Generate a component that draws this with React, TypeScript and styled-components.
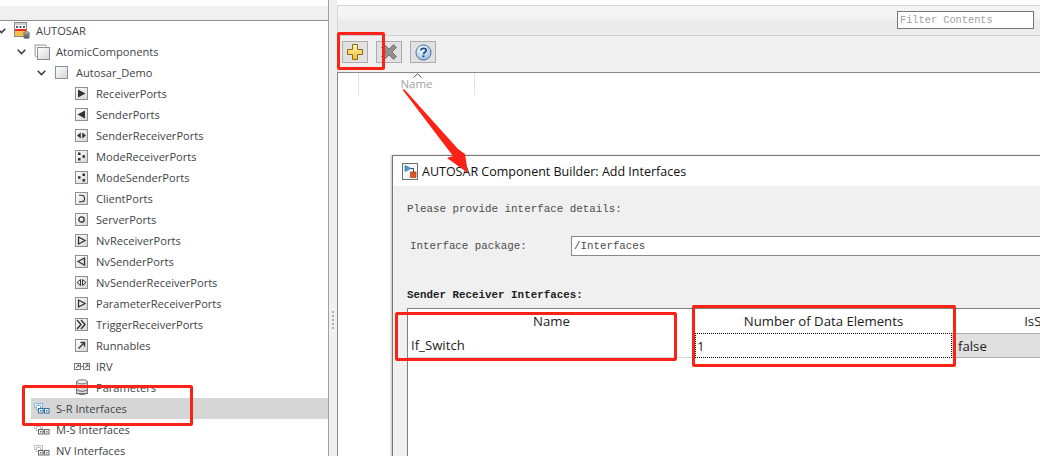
import React from "react";
import styled, { createGlobalStyle } from "styled-components";

const GlobalStyle = createGlobalStyle`
  html, body {
    margin: 0;
    padding: 0;
    background: #fff;
  }
`;

const Page = styled.div`
  position: relative;
  width: 1040px;
  height: 456px;
  overflow: hidden;
  display: flex;
  background: #fff;
  font-family: "Open Sans", "Noto Sans", sans-serif;
`;

const TreePanel = styled.div`
  width: 329px;
  height: 100%;
  padding-top: 6px;
  box-sizing: border-box;
  display: flex;
  flex-direction: column;
  flex-shrink: 0;
  border-right: 1px solid #a0a0a0;
  overflow: hidden;
`;

const TreeHeader = styled.div`
  height: 14px;
  flex-shrink: 0;
  background: #f0f0f0;
  border-bottom: 1px solid #8e8e8e;
`;

const TreeList = styled.div`
  display: flex;
  flex-direction: column;
  margin-top: -1px;
`;

const Row = styled.div<{ $indent: number; $selected?: boolean }>`
  height: 21px;
  flex-shrink: 0;
  display: flex;
  align-items: center;
  padding-left: ${(p) => (p.$selected ? 3 : p.$indent)}px;
  margin-left: ${(p) => (p.$selected ? 31 : 0)}px;
  background: ${(p) => (p.$selected ? "#d6d6d6" : "transparent")};
  color: #404349;
  font-size: 11.1px;
  white-space: nowrap;
`;

const Twisty = styled.span`
  width: 14px;
  height: 21px;
  flex-shrink: 0;
  display: flex;
  align-items: center;
  margin-left: -3px;
  margin-right: 3px;
`;

const IconSlot = styled.span`
  width: 22px;
  flex-shrink: 0;
  display: flex;
  align-items: center;
`;

const Splitter = styled.div`
  width: 8px;
  flex-shrink: 0;
  background: #f0f0f0;
  display: flex;
  flex-direction: column;
  align-items: center;
  justify-content: flex-start;
  gap: 2px;
  padding-top: 311px;
  box-sizing: border-box;
`;

const GripDot = styled.span`
  width: 2px;
  height: 2px;
  background: #b4b4b4;
`;

const ContentPanel = styled.div`
  flex: 1;
  margin-top: 5px;
  display: flex;
  flex-direction: column;
  border-top: 1px solid #d4d4d4;
  border-left: 1px solid #d4d4d4;
  background: #f0f0f0;
`;

const FilterBar = styled.div`
  height: 30px;
  flex-shrink: 0;
  display: flex;
  align-items: flex-start;
  justify-content: flex-end;
  padding: 5px 6px 0 0;
  box-sizing: border-box;
  background: linear-gradient(#f5f5f5 0, #f3f3f3 13px, #ebebeb 14px, #ebebeb 100%);
  border-bottom: 1px solid #d0d0d0;
`;

const FilterBox = styled.div`
  width: 137px;
  height: 18px;
  box-sizing: border-box;
  border: 1px solid #777;
  background: #fff;
  padding-left: 2px;
  color: #a0a0a0;
  font: 10.3px/17px "Liberation Mono", monospace;
`;

const Toolbar = styled.div`
  height: 36px;
  flex-shrink: 0;
  display: flex;
  align-items: flex-start;
  gap: 8px;
  padding: 5px 0 0 4px;
  box-sizing: border-box;
`;

const ToolButton = styled.div`
  width: 26px;
  height: 22px;
  box-sizing: border-box;
  border: 1px solid #adadad;
  background: #e1e1e1;
  display: flex;
  align-items: center;
  justify-content: center;
`;

const ListArea = styled.div`
  flex: 1;
  margin-left: -1px;
  background: #fff;
  border-top: 1px solid #8a8a8a;
  border-left: 1px solid #8a8a8a;
`;

const ListHeader = styled.div`
  display: flex;
  height: 22px;
  padding-left: 20px;
`;

const ListColumn = styled.div`
  position: relative;
  width: 117px;
  box-sizing: border-box;
  border-left: 1px solid #e0e0e0;
  border-right: 1px solid #e0e0e0;
  text-align: center;
  color: #a3a3a3;
  font-size: 11.5px;
  line-height: 22px;
`;

const SortCaret = styled.svg`
  position: absolute;
  left: 54px;
  top: 0;
`;

const Dialog = styled.div`
  position: absolute;
  left: 392px;
  top: 155px;
  width: 760px;
  height: 320px;
  border: 1px solid #777;
  box-shadow: -1px 0 2px rgba(0, 0, 0, 0.25);
  background: #f0f0f0;
  display: flex;
  flex-direction: column;
`;

const TitleBar = styled.div`
  height: 30px;
  flex-shrink: 0;
  background: #fff;
  display: flex;
  align-items: center;
  gap: 4px;
  padding-left: 9px;
  color: #111;
  font-size: 12.5px;
`;

const DialogBody = styled.div`
  flex: 1;
  padding: 15px 0 0 14px;
  display: flex;
  flex-direction: column;
`;

const Prompt = styled.div`
  height: 16px;
  color: #4c4c4c;
  font: 10.85px/16px "Liberation Mono", monospace;
`;

const PackageRow = styled.div`
  display: flex;
  align-items: center;
  height: 20px;
  margin-top: 19px;
  padding-left: 3px;
  color: #4c4c4c;
  font: 10.8px "Liberation Mono", monospace;
`;

const PackageLabel = styled.span`
  width: 161px;
  flex-shrink: 0;
`;

const PackageInput = styled.div`
  flex: 1;
  height: 20px;
  box-sizing: border-box;
  border: 1px solid #8a8a8a;
  background: #fff;
  padding-left: 2px;
  line-height: 19px;
  font-size: 10.8px;
`;

const SectionTitle = styled.div`
  height: 16px;
  margin-top: 31px;
  color: #222;
  font: bold 10.85px/16px "Liberation Mono", monospace;
`;

const InterfaceTable = styled.div`
  flex: 1;
  margin-top: 5px;
  background: #fff;
  border-top: 1px solid #808080;
  border-left: 1px solid #808080;
  display: grid;
  grid-template-columns: 287px 257px 198px;
  grid-template-rows: 24px 25px;
  align-content: start;
  color: #222;
  font-size: 13.2px;
`;

const HeadCell = styled.div`
  display: flex;
  align-items: center;
  justify-content: center;
`;

const NameCell = styled.div`
  display: flex;
  align-items: center;
  padding-left: 3px;
  border-bottom: 1px solid #d8d8d8;
`;

const EditCell = styled.div`
  display: flex;
  align-items: center;
  padding-left: 1px;
  border: 1px dotted #111;
`;

const ReadonlyCell = styled.div`
  display: flex;
  align-items: center;
  padding-left: 6px;
  background: #e0e0e0;
  border-top: 1px solid #b0b0b0;
  border-bottom: 1px solid #b0b0b0;
`;

const RedBox = styled.div<{ $x: number; $y: number; $w: number; $h: number }>`
  position: absolute;
  left: ${(p) => p.$x}px;
  top: ${(p) => p.$y}px;
  width: ${(p) => p.$w}px;
  height: ${(p) => p.$h}px;
  box-sizing: border-box;
  border: 3px solid #fb2216;
  border-radius: 2px;
`;

const Arrow = styled.svg`
  position: absolute;
  left: 0;
  top: 0;
`;

const PortFrame = styled.svg`
  margin-left: 1px;
`;

const DatabaseFrame = styled.svg`
  margin-left: 2px;
`;

const Chevron = () => (
  <svg width="9" height="6" viewBox="0 0 9 6">
    <path d="M0.7 0.8 L4.5 4.6 L8.3 0.8" fill="none" stroke="#3c3c3c" strokeWidth="1.5" />
  </svg>
);

const Gradients = () => (
  <defs>
    <linearGradient id="frameFill" x1="0" y1="0" x2="1" y2="1">
      <stop offset="0" stopColor="#ffffff" />
      <stop offset="1" stopColor="#d2d6da" />
    </linearGradient>
  </defs>
);

type PortKind =
  | "receiver"
  | "sender"
  | "senderReceiver"
  | "modeReceiver"
  | "modeSender"
  | "client"
  | "server"
  | "nvReceiver"
  | "nvSender"
  | "nvSenderReceiver"
  | "trigger"
  | "runnable"
  | "plain";

const glyphs: Record<PortKind, React.ReactNode> = {
  receiver: <path d="M3 2.5 L10.5 6.5 L3 10.5Z" fill="#333" />,
  sender: <path d="M10 2.5 L2.5 6.5 L10 10.5Z" fill="#333" />,
  senderReceiver: <path d="M5.8 3.5 L2 6.5 L5.8 9.5Z M7.2 3.5 L11 6.5 L7.2 9.5Z" fill="#333" />,
  modeReceiver: <path d="M3 2.5h2.5v2.5H3z M7.5 5.2h2.5v2.5H7.5z M3 8h2.5v2.5H3z" fill="#333" />,
  modeSender: <path d="M7.5 2.5h2.5v2.5H7.5z M3 5.2h2.5v2.5H3z M7.5 8h2.5v2.5H7.5z" fill="#333" />,
  client: <path d="M4 3.2 H6.5 A3 3.3 0 0 1 6.5 9.8 H4" fill="none" stroke="#333" strokeWidth="1.1" />,
  server: <circle cx="6.5" cy="6.5" r="2.7" fill="none" stroke="#333" strokeWidth="1.3" />,
  nvReceiver: <path d="M3.5 3 L10 6.5 L3.5 10Z" fill="none" stroke="#333" strokeWidth="1.3" />,
  nvSender: <path d="M9.5 3 L3 6.5 L9.5 10Z" fill="none" stroke="#333" strokeWidth="1.3" />,
  nvSenderReceiver: (
    <path
      d="M5.5 3.5 L2 6.5 L5.5 9.5Z M7.5 3.5 L11 6.5 L7.5 9.5Z"
      fill="none"
      stroke="#333"
      strokeWidth="1"
    />
  ),
  trigger: (
    <path
      d="M2 2 L6 6.5 L2 11 M6 2 L10 6.5 L6 11"
      fill="none"
      stroke="#333"
      strokeWidth="1.4"
    />
  ),
  runnable: <path d="M3.5 9.5 L8.5 4.5 M5.5 3.5 H9.5 V7.5" fill="none" stroke="#333" strokeWidth="1.4" />,
  plain: null,
};

const PortIcon = ({ kind }: { kind: PortKind }) => (
  <PortFrame width="13" height="13" viewBox="0 0 13 13">
    <Gradients />
    <rect x="0.5" y="0.5" width="12" height="12" fill="url(#frameFill)" stroke="#8c8f93" />
    {glyphs[kind]}
  </PortFrame>
);

const ModelIcon = () => (
  <svg width="16" height="17" viewBox="0 0 16 17">
    <rect x="0.5" y="0.5" width="12" height="14" fill="#fff" stroke="#8a8a8a" />
    <rect x="1" y="1" width="11" height="2" fill="#cfcfcf" />
    <path d="M2 4h2v2H2z M5.5 4h2v2h-2z M9 4h2v2H9z" fill="#5a5a5a" />
    <rect x="1" y="7" width="11" height="2" fill="#ee2a22" />
    <rect x="1" y="9" width="11" height="5" fill="#f8bc4a" />
    <rect x="9.5" y="11" width="6" height="4.5" fill="#777" />
    <ellipse cx="12.5" cy="11" rx="3" ry="1.4" fill="#a8a8a8" stroke="#666" strokeWidth="0.5" />
    <ellipse cx="12.5" cy="15.4" rx="3" ry="1.3" fill="#666" />
  </svg>
);

const StackIcon = () => (
  <svg width="16" height="16" viewBox="0 0 16 16">
    <Gradients />
    <rect x="0.5" y="0.5" width="11" height="11" fill="#fff" stroke="#d0d0d0" />
    <rect x="1.5" y="1.5" width="11" height="11" fill="#fff" stroke="#c0c0c0" />
    <rect x="3.5" y="3.5" width="12" height="12" fill="url(#frameFill)" stroke="#8c8f93" />
  </svg>
);

const IrvIcon = () => (
  <svg width="16" height="9" viewBox="0 0 16 9">
    <path d="M7 4.5 H9" stroke="#777" />
    <rect x="0.5" y="1.5" width="6" height="6" fill="#f4f4f4" stroke="#777" />
    <rect x="9.5" y="1.5" width="6" height="6" fill="#f4f4f4" stroke="#777" />
    <path d="M2 6 L5 3 M3 3 H5 V5 M11 6 L14 3 M12 3 H14 V5" fill="none" stroke="#444" strokeWidth="0.8" />
  </svg>
);

const DatabaseIcon = () => (
  <DatabaseFrame width="13" height="17" viewBox="0 0 13 17">
    <rect x="0.5" y="2.5" width="11" height="12" fill="#d8d8d8" stroke="#7a7a7a" />
    <ellipse cx="6" cy="2.8" rx="5.5" ry="2" fill="#efefef" stroke="#7a7a7a" />
    <path d="M0.5 7 Q6 10 11.5 7 M0.5 11 Q6 14 11.5 11 M0.5 14.4 Q6 17 11.5 14.4" fill="none" stroke="#6a6a6a" />
  </DatabaseFrame>
);

const InterfaceIcon = ({ $tone }: { $tone: "blue" | "grey" }) => {
  const back = $tone === "blue" ? "#8cb8dc" : "#c4c4c4";
  const front = $tone === "blue" ? "#2f6fa8" : "#666";
  return (
    <svg width="16" height="11" viewBox="0 0 16 11">
      <rect x="0.5" y="0.5" width="4" height="4" fill="#fff" stroke={back} />
      <rect x="4.5" y="0.5" width="4" height="4" fill="#fff" stroke={back} />
      <rect x="2.5" y="2.5" width="4" height="4" fill="#fff" stroke={back} />
      <path d="M6 7.5 H11" stroke={front} />
      <rect x="4.5" y="5.5" width="4.5" height="4.5" fill="#fff" stroke={front} />
      <rect x="10.5" y="5.5" width="4.5" height="4.5" fill="#fff" stroke={front} />
      <path d="M6 7h1.5v1.5H6z M12 7h1.5v1.5H12z" fill={front} />
    </svg>
  );
};

const PlusIcon = () => (
  <svg width="16" height="16" viewBox="0 0 16 16">
    <defs>
      <linearGradient id="plusFill" x1="0" y1="0" x2="0" y2="1">
        <stop offset="0" stopColor="#fff6b8" />
        <stop offset="1" stopColor="#f2bd2a" />
      </linearGradient>
    </defs>
    <path
      d="M5.5 0.5 H10.5 V5.5 H15.5 V10.5 H10.5 V15.5 H5.5 V10.5 H0.5 V5.5 H5.5Z"
      fill="url(#plusFill)"
      stroke="#8d6b14"
      strokeLinejoin="round"
    />
  </svg>
);

const RemoveIcon = () => (
  <svg width="16" height="16" viewBox="0 0 16 16">
    <path
      d="M0.5 3.5 L3.5 0.5 L8 5 L12.5 0.5 L15.5 3.5 L11 8 L15.5 12.5 L12.5 15.5 L8 11 L3.5 15.5 L0.5 12.5 L5 8Z"
      fill="#8f8f8f"
      stroke="#777"
    />
  </svg>
);

const HelpIcon = () => (
  <svg width="17" height="17" viewBox="0 0 18 18">
    <defs>
      <radialGradient id="helpFill" cx="0.4" cy="0.3" r="0.8">
        <stop offset="0" stopColor="#ffffff" />
        <stop offset="1" stopColor="#8db6dc" />
      </radialGradient>
    </defs>
    <circle cx="9" cy="9" r="8" fill="url(#helpFill)" stroke="#3d6c9c" />
    <path
      d="M6.3 6.8 C6.3 3.8 11.8 3.8 11.8 6.8 C11.8 8.8 9 8.6 9 10.8"
      fill="none"
      stroke="#1f4f86"
      strokeWidth="1.9"
    />
    <rect x="8" y="12" width="2" height="2" fill="#1f4f86" />
  </svg>
);

const WindowIcon = () => (
  <svg width="16" height="17" viewBox="0 0 16 17">
    <rect x="0.5" y="0.5" width="15" height="16" fill="#f6f6f6" stroke="#6e6e6e" />
    <path d="M3 2.5 L9 5.5 L3 8.5Z" fill="#3f9bd0" stroke="#1f6fa0" strokeWidth="0.6" />
    <path d="M9 5.5 H11.5 V9" fill="none" stroke="#444" />
    <rect x="8.5" y="9" width="5.5" height="5.5" fill="#e2541e" stroke="#9a3410" strokeWidth="0.6" />
  </svg>
);

type TreeItem = {
  label: string;
  indent: number;
  icon: React.ReactNode;
  twisty?: boolean;
  selected?: boolean;
};

const port = (label: string, kind: PortKind): TreeItem => ({
  label,
  indent: 60,
  icon: <PortIcon kind={kind} />,
});

const items: TreeItem[] = [
  { label: "AUTOSAR", indent: 0, icon: <ModelIcon />, twisty: true },
  { label: "AtomicComponents", indent: 20, icon: <StackIcon />, twisty: true },
  { label: "Autosar_Demo", indent: 40, icon: <PortIcon kind="plain" />, twisty: true },
  port("ReceiverPorts", "receiver"),
  port("SenderPorts", "sender"),
  port("SenderReceiverPorts", "senderReceiver"),
  port("ModeReceiverPorts", "modeReceiver"),
  port("ModeSenderPorts", "modeSender"),
  port("ClientPorts", "client"),
  port("ServerPorts", "server"),
  port("NvReceiverPorts", "nvReceiver"),
  port("NvSenderPorts", "nvSender"),
  port("NvSenderReceiverPorts", "nvSenderReceiver"),
  port("ParameterReceiverPorts", "nvReceiver"),
  port("TriggerReceiverPorts", "trigger"),
  port("Runnables", "runnable"),
  { label: "IRV", indent: 60, icon: <IrvIcon /> },
  { label: "Parameters", indent: 60, icon: <DatabaseIcon /> },
  { label: "S-R Interfaces", indent: 20, icon: <InterfaceIcon $tone="blue" />, selected: true },
  { label: "M-S Interfaces", indent: 20, icon: <InterfaceIcon $tone="grey" /> },
  { label: "NV Interfaces", indent: 20, icon: <InterfaceIcon $tone="grey" /> },
];

const App: React.FC = () => {
  return (
    <Page>
      <GlobalStyle />
      <TreePanel>
        <TreeHeader />
        <TreeList>
          {items.map((item) => (
            <Row key={item.label} $indent={item.indent} $selected={item.selected}>
              {!item.selected && <Twisty>{item.twisty && <Chevron />}</Twisty>}
              <IconSlot>{item.icon}</IconSlot>
              {item.label}
            </Row>
          ))}
        </TreeList>
      </TreePanel>
      <Splitter>
        {[0, 1, 2, 3, 4].map((i) => (
          <GripDot key={i} />
        ))}
      </Splitter>
      <ContentPanel>
        <FilterBar>
          <FilterBox>Filter Contents</FilterBox>
        </FilterBar>
        <Toolbar>
          <ToolButton>
            <PlusIcon />
          </ToolButton>
          <ToolButton>
            <RemoveIcon />
          </ToolButton>
          <ToolButton>
            <HelpIcon />
          </ToolButton>
        </Toolbar>
        <ListArea>
          <ListHeader>
            <ListColumn>
              <SortCaret width="9" height="5" viewBox="0 0 9 5">
                <path d="M0.5 4.5 L4.5 0.8 L8.5 4.5" fill="none" stroke="#555" />
              </SortCaret>
              Name
            </ListColumn>
          </ListHeader>
        </ListArea>
      </ContentPanel>

      <Dialog>
        <TitleBar>
          <WindowIcon />
          AUTOSAR Component Builder: Add Interfaces
        </TitleBar>
        <DialogBody>
          <Prompt>Please provide interface details:</Prompt>
          <PackageRow>
            <PackageLabel>Interface package:</PackageLabel>
            <PackageInput>/Interfaces</PackageInput>
          </PackageRow>
          <SectionTitle>Sender Receiver Interfaces:</SectionTitle>
          <InterfaceTable>
            <HeadCell>Name</HeadCell>
            <HeadCell>Number of Data Elements</HeadCell>
            <HeadCell>IsService</HeadCell>
            <NameCell>If_Switch</NameCell>
            <EditCell>1</EditCell>
            <ReadonlyCell>false</ReadonlyCell>
          </InterfaceTable>
        </DialogBody>
      </Dialog>

      <RedBox $x={337} $y={32} $w={48} $h={38} />
      <RedBox $x={22} $y={385} $w={171} $h={41} />
      <RedBox $x={395} $y={312} $w={282} $h={49} />
      <RedBox $x={692} $y={305} $w={264} $h={62} />
      <Arrow width="1040" height="456" viewBox="0 0 1040 456">
        <path d="M402 89 L405 90 L458 149 L465 154 L468 173 L447 158 L453 156 Z" fill="#fb2216" />
      </Arrow>
    </Page>
  );
};

export default App;
